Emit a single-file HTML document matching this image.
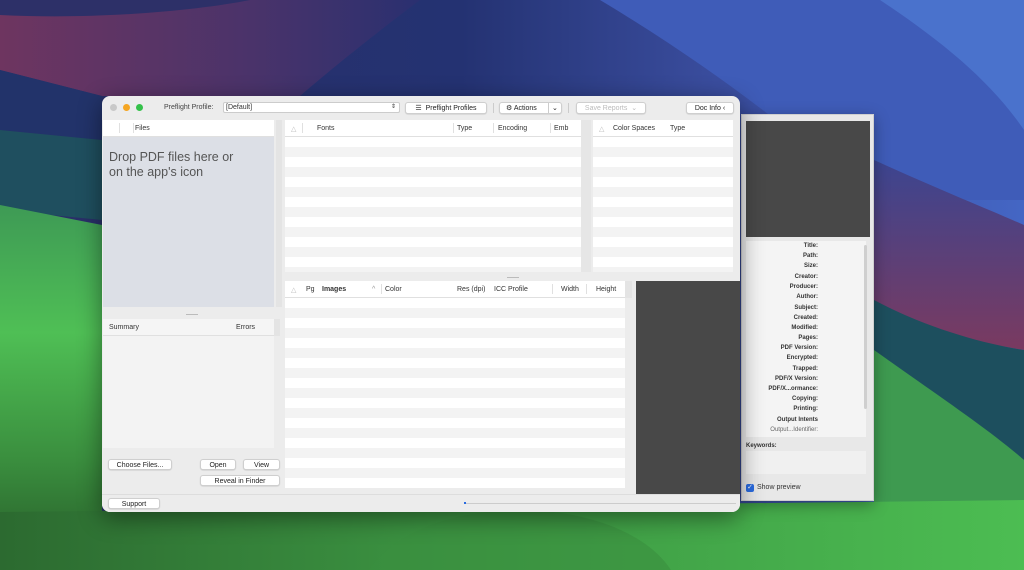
<!DOCTYPE html>
<html><head><meta charset="utf-8"><style>
*{box-sizing:border-box;margin:0;padding:0}
body{width:1024px;height:570px;overflow:hidden;position:relative;font-family:"Liberation Sans",sans-serif;font-size:7px;color:#333}
.a{position:absolute}
.win{left:102px;top:96px;width:638px;height:416px;background:#ececec;border-radius:8px;box-shadow:0 6px 24px rgba(0,0,0,.45);overflow:hidden}
.btn{position:absolute;background:#fff;border:1px solid #cfcfcf;border-radius:3px;font-size:7px;text-align:center;line-height:11px;color:#222;box-shadow:0 .5px 1px rgba(0,0,0,.15)}
.hdr{position:absolute;background:#fff;border-bottom:1px solid #e0e0e0;font-size:7px;color:#333}
.hdr span{position:absolute;top:5px}
.str{position:absolute;background:repeating-linear-gradient(#fff 0 10px,#f3f3f3 10px 20px)}
.sep{position:absolute;width:1px;height:10px;top:3px;background:#e0e0e0}
.di{position:absolute;right:0;width:72px;text-align:right;font-weight:bold;font-size:6px;color:#333}
</style></head><body>
<svg class="a" style="left:0;top:0" width="1024" height="570" viewBox="0 0 1024 570">
<defs>
<linearGradient id="bg" x1="0" y1="0" x2="1" y2="0"><stop offset="0" stop-color="#2a2f66"/><stop offset=".45" stop-color="#243272"/><stop offset=".7" stop-color="#3a4d9e"/><stop offset="1" stop-color="#4466c4"/></linearGradient>
<linearGradient id="red" x1="0" y1="0" x2="1" y2="0"><stop offset="0" stop-color="#6e3560"/><stop offset=".6" stop-color="#4a336a"/><stop offset="1" stop-color="#2a3070"/></linearGradient>
<linearGradient id="red2" x1="0" y1="0" x2="0" y2="1"><stop offset="0" stop-color="#3c4590"/><stop offset="1" stop-color="#7a3a60"/></linearGradient>
<linearGradient id="gl" x1="0" y1="0" x2="0" y2="1"><stop offset="0" stop-color="#3e9a55"/><stop offset=".35" stop-color="#4fbf55"/><stop offset=".7" stop-color="#3a8e3e"/><stop offset="1" stop-color="#265a28"/></linearGradient>
<linearGradient id="gb" x1="0" y1="0" x2="1" y2="0"><stop offset="0" stop-color="#2c6a30"/><stop offset=".5" stop-color="#3e9a44"/><stop offset="1" stop-color="#4cbd52"/></linearGradient>
</defs>
<rect width="1024" height="570" fill="url(#bg)"/>
<path d="M600 0 C700 60 780 120 874 200 L1024 200 L1024 0Z" fill="#3f5cb8"/>
<path d="M880 0 C940 40 990 80 1024 130 L1024 0Z" fill="#4a72cc"/>
<path d="M0 0 L420 0 C380 30 330 70 300 96 L102 96 L0 70Z" fill="url(#red)"/>
<path d="M0 0 L250 0 C200 10 100 20 0 15Z" fill="#2d3068"/>
<path d="M0 70 L102 96 L102 140 L0 130Z" fill="#22336a"/>
<path d="M874 160 C940 190 990 210 1024 225 L1024 350 C960 340 910 325 874 305Z" fill="url(#red2)"/>
<path d="M874 300 C930 330 990 345 1024 350 L1024 460 C960 420 910 380 874 355Z" fill="#1d4f5e"/>
<path d="M874 350 C930 390 990 430 1024 460 L1024 570 L874 570Z" fill="#3e9a50"/>
<path d="M0 130 L102 140 L102 220 L0 210Z" fill="#1f4f5f"/>
<path d="M0 205 L102 225 L102 570 L0 570Z" fill="url(#gl)"/>
<path d="M0 512 L1024 500 L1024 570 L0 570Z" fill="url(#gb)"/>
<ellipse cx="520" cy="600" rx="160" ry="90" fill="#3a9040" opacity=".6"/>
</svg>

<!-- Doc info panel -->
<div class="a" style="left:741px;top:114px;width:133px;height:387px;background:#e8e8e8;border:1px solid #cfcfcf;box-shadow:0 4px 14px rgba(0,0,0,.35)">
 <div class="a" style="left:4px;top:6px;width:124px;height:116px;background:#484848"></div>
 <div class="a" style="left:4px;top:126px;width:120px;height:196px;background:#f4f4f4">
  <div class="a" style="left:118px;top:4px;width:3px;height:164px;background:#cfcfcf;border-radius:2px"></div>
  <div class="a" style="left:0;top:0;width:72px;height:200px">
   <div class="di" style="top:2px">Title:</div><div class="di" style="top:12px">Path:</div><div class="di" style="top:22px">Size:</div><div class="di" style="top:33px">Creator:</div><div class="di" style="top:43px">Producer:</div><div class="di" style="top:53px">Author:</div><div class="di" style="top:64px">Subject:</div><div class="di" style="top:74px">Created:</div><div class="di" style="top:84px">Modified:</div><div class="di" style="top:94px">Pages:</div><div class="di" style="top:104px">PDF Version:</div><div class="di" style="top:114px">Encrypted:</div><div class="di" style="top:125px">Trapped:</div><div class="di" style="top:135px">PDF/X Version:</div><div class="di" style="top:145px">PDF/X...ormance:</div><div class="di" style="top:155px">Copying:</div><div class="di" style="top:165px">Printing:</div><div class="di" style="top:176px">Output Intents</div><div class="di" style="top:186px;font-weight:normal;color:#666">Output...Identifier:</div>
  </div>
 </div>
 <div class="a" style="left:4px;top:328px;font-size:6px;font-weight:bold">Keywords:</div>
 <div class="a" style="left:4px;top:336px;width:120px;height:23px;background:#f0f0f0"></div>
 <div class="a" style="left:4px;top:369px;width:8px;height:8px;background:#2a6be0;border-radius:2px;color:#fff;font-size:7px;line-height:8px;text-align:center">✓</div>
 <div class="a" style="left:15px;top:369px;font-size:7px">Show preview</div>
</div>

<div class="a win">
 <div class="a" style="left:8px;top:8px;width:7px;height:7px;border-radius:50%;background:#c9c9c9"></div>
 <div class="a" style="left:21px;top:8px;width:7px;height:7px;border-radius:50%;background:#f5a623"></div>
 <div class="a" style="left:34px;top:8px;width:7px;height:7px;border-radius:50%;background:#34c14a"></div>
 <div class="a" style="left:62px;top:8px;font-size:7px;color:#444">Preflight Profile:</div>
 <div class="a" style="left:121px;top:6px;width:177px;height:11px;background:#fff;border:1px solid #ccc;border-radius:2px;font-size:7px;padding-left:2px;line-height:9px">[Default]<span style="position:absolute;right:3px;font-size:6px">⇕</span></div>
 <div class="btn" style="left:303px;top:6px;width:82px;height:12px">☰&nbsp; Preflight Profiles</div>
 <div class="a" style="left:391px;top:7px;width:1px;height:10px;background:#ccc"></div>
 <div class="btn" style="left:397px;top:6px;width:63px;height:12px;text-align:left;padding-left:6px">⚙ Actions<span style="position:absolute;left:48px;top:0;width:1px;height:10px;background:#ccc"></span><span style="position:absolute;left:52px">⌄</span></div>
 <div class="a" style="left:466px;top:7px;width:1px;height:10px;background:#ccc"></div>
 <div class="btn" style="left:474px;top:6px;width:70px;height:12px;color:#bbb">Save Reports&nbsp; ⌄</div>
 <div class="btn" style="left:584px;top:6px;width:48px;height:12px">Doc Info ‹</div>

 <div class="hdr" style="left:1px;top:24px;width:171px;height:17px"><span style="left:32px">Files</span><div class="sep" style="left:16px"></div><div class="sep" style="left:30px"></div></div>
 <div class="a" style="left:1px;top:41px;width:171px;height:170px;background:#dcdfe6;font-size:12.5px;color:#555;padding:13px 6px;line-height:15px">Drop PDF files here or<br>on the app's icon</div>
 <div class="a" style="left:174px;top:24px;width:6px;height:187px;background:#e4e4e4"></div>
 <div class="a" style="left:84px;top:218px;width:12px;height:1px;background:#bbb"></div>
 <div class="hdr" style="left:1px;top:223px;width:171px;height:17px;background:#f5f5f5"><span style="left:6px">Summary</span><span style="left:133px">Errors</span></div>
 <div class="a" style="left:172px;top:223px;width:6px;height:17px;background:#e4e4e4"></div>
 <div class="a" style="left:1px;top:240px;width:171px;height:112px;background:#f3f3f3"></div>
 <div class="btn" style="left:6px;top:363px;width:64px;height:11px">Choose Files...</div>
 <div class="btn" style="left:98px;top:363px;width:36px;height:11px">Open</div>
 <div class="btn" style="left:141px;top:363px;width:37px;height:11px">View</div>
 <div class="btn" style="left:98px;top:379px;width:80px;height:11px">Reveal in Finder</div>

 <div class="hdr" style="left:183px;top:24px;width:296px;height:17px"><span style="left:6px;color:#bbb">△</span><div class="sep" style="left:17px"></div><span style="left:32px">Fonts</span><div class="sep" style="left:168px"></div><span style="left:172px">Type</span><div class="sep" style="left:208px"></div><span style="left:213px">Encoding</span><div class="sep" style="left:265px"></div><span style="left:269px">Emb</span></div>
 <div class="str" style="left:183px;top:41px;width:296px;height:135px"></div>
 <div class="a" style="left:479px;top:24px;width:10px;height:152px;background:#e6e6e6"></div>
 <div class="hdr" style="left:491px;top:24px;width:140px;height:17px"><span style="left:6px;color:#bbb">△</span><span style="left:20px">Color Spaces</span><span style="left:77px">Type</span></div>
 <div class="str" style="left:491px;top:41px;width:140px;height:135px"></div>
 <div class="a" style="left:405px;top:181px;width:12px;height:1px;background:#bbb"></div>

 <div class="hdr" style="left:183px;top:185px;width:340px;height:17px"><span style="left:6px;color:#bbb">△</span><span style="left:21px">Pg</span><span style="left:37px;font-weight:bold">Images</span><span style="left:87px;color:#999">^</span><div class="sep" style="left:96px"></div><span style="left:100px">Color</span><span style="left:172px">Res (dpi)</span><span style="left:209px">ICC Profile</span><div class="sep" style="left:267px"></div><span style="left:276px">Width</span><div class="sep" style="left:301px"></div><span style="left:311px">Height</span></div>
 <div class="a" style="left:523px;top:185px;width:7px;height:17px;background:#e4e4e4"></div>
 <div class="str" style="left:183px;top:202px;width:340px;height:190px"></div>
 <div class="a" style="left:534px;top:185px;width:104px;height:213px;background:#484848"></div>

 <div class="a" style="left:0;top:398px;width:638px;height:18px;background:#ececec;border-top:1px solid #ddd"></div>
 <div class="btn" style="left:6px;top:402px;width:52px;height:11px">Support</div>
 <div class="a" style="left:364px;top:407px;width:270px;height:1px;background:#ccc"></div>
 <div class="a" style="left:362px;top:406px;width:2px;height:2px;background:#2a6be0"></div>
</div>
</body></html>
